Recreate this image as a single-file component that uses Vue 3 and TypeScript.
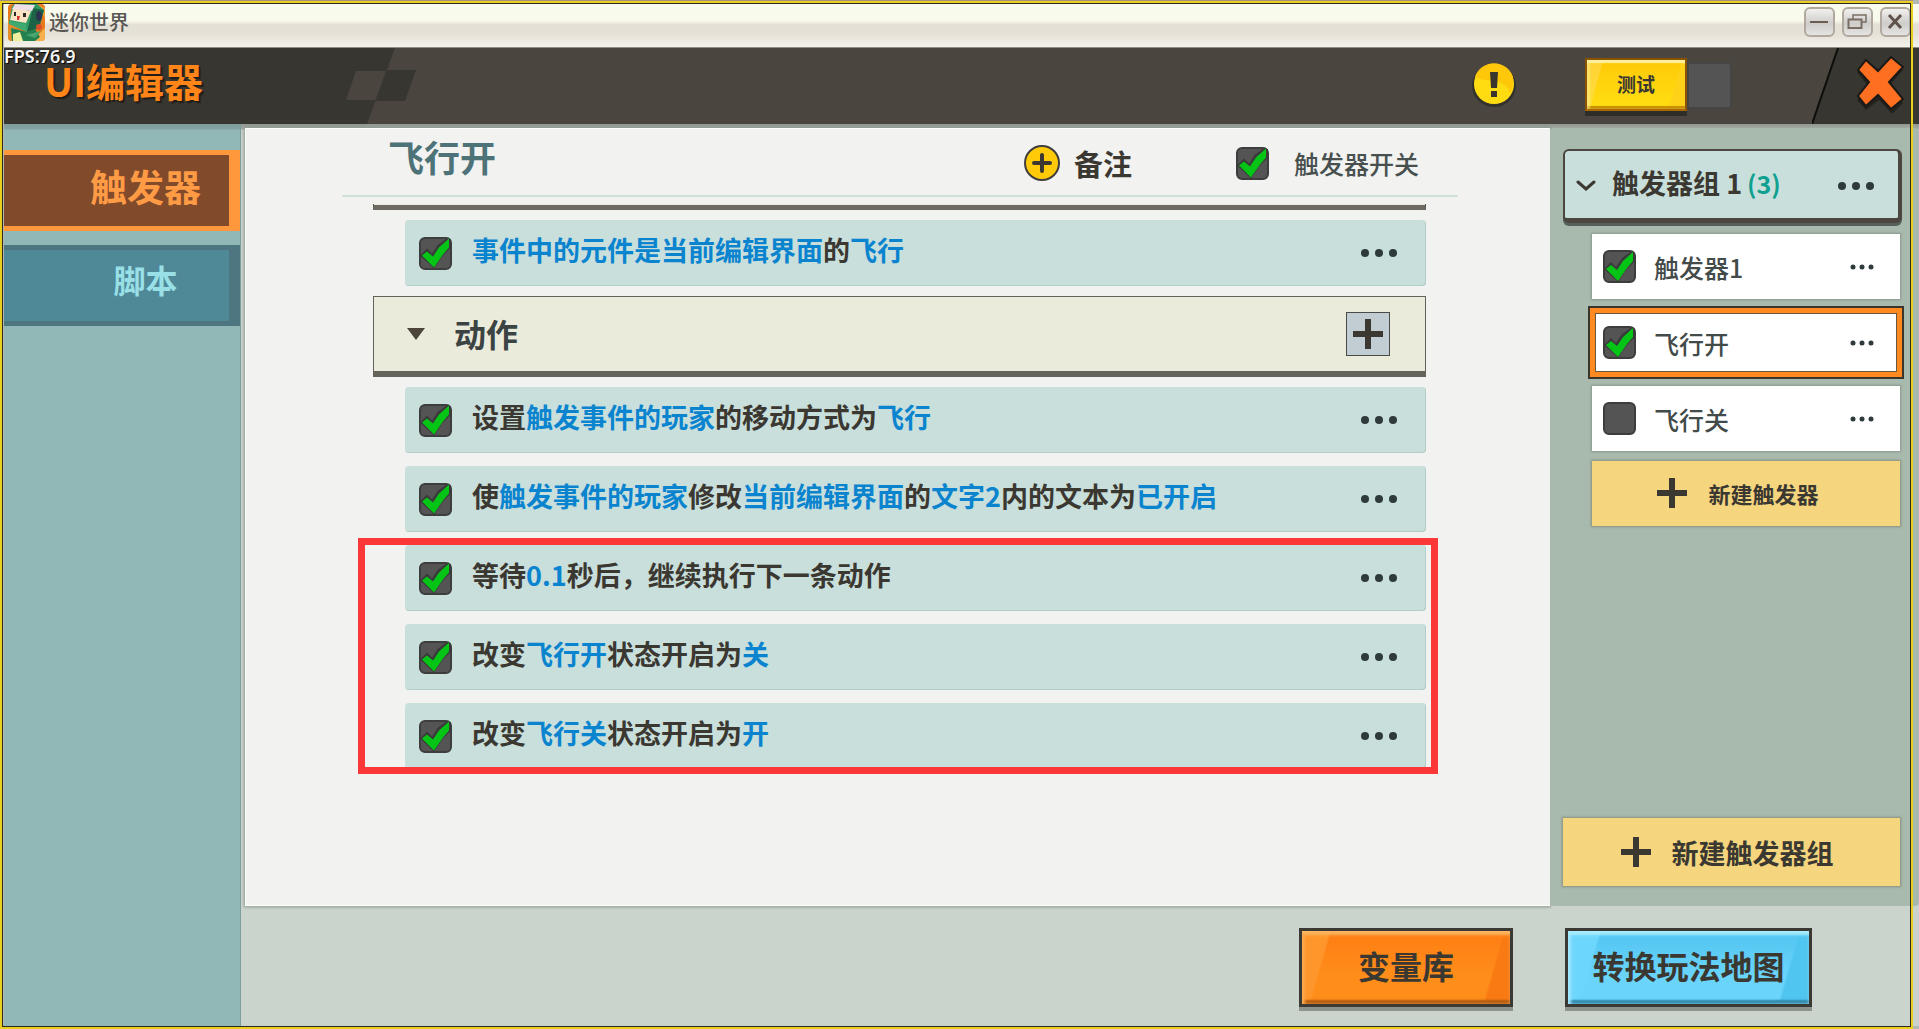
<script setup lang="ts">
import { reactive, ref } from 'vue'

interface Part {
  text: string
  link?: boolean
}
interface Rule {
  on: boolean
  parts: Part[]
}
interface Trigger {
  name: string
  on: boolean
}

const link = (text: string): Part => ({ text, link: true })
const word = (text: string): Part => ({ text })

const conditions = reactive<Rule[]>([
  { on: true, parts: [link('事件中的元件是当前编辑界面'), word('的'), link('飞行')] },
])

const actions = reactive<Rule[]>([
  { on: true, parts: [word('设置'), link('触发事件的玩家'), word('的移动方式为'), link('飞行')] },
  {
    on: true,
    parts: [
      word('使'),
      link('触发事件的玩家'),
      word('修改'),
      link('当前编辑界面'),
      word('的'),
      link('文字2'),
      word('内的文本为'),
      link('已开启'),
    ],
  },
])

const marked = reactive<Rule[]>([
  { on: true, parts: [word('等待'), link('0.1'), word('秒后，继续执行下一条动作')] },
  { on: true, parts: [word('改变'), link('飞行开'), word('状态开启为'), link('关')] },
  { on: true, parts: [word('改变'), link('飞行关'), word('状态开启为'), link('开')] },
])

const triggers = reactive<Trigger[]>([
  { name: '触发器1', on: true },
  { name: '飞行开', on: true },
  { name: '飞行关', on: false },
])

const selected = ref('飞行开')
const enabled = ref(true)
</script>

<template>
  <div class="window">
    <div class="titlebar">
      <svg class="app-icon" viewBox="0 0 37 37" aria-hidden="true">
        <rect width="37" height="37" rx="4" fill="#e8791c" />
        <path d="M28 0 L37 4 V14Z" fill="#f2a13c" />
        <path d="M24 37 L37 24 V33 Q37 37 33 37Z" fill="#f7b04a" />
        <path d="M0 14 L9 24 L4 37 Q0 37 0 33Z" fill="#e58a2b" />
        <path d="M7 0 H29 L36 6 L31 24 L19 28 L1 19 L4 2Z" fill="#2f9a63" />
        <path d="M25 4 L36 6 L31 24 L19 28Z" fill="#1d6446" />
        <path d="M5 4 L23 7 L18 19 L2 16Z" fill="#fbe3c4" />
        <path d="M7 0 L27 1 L24 7 L4 5Z" fill="#f0dfe6" />
        <path d="M1 17 L18 20 L19 28 L1 20Z" fill="#3dab70" />
        <rect x="6" y="8" width="2" height="4" fill="#2b2a26" />
        <rect x="15" y="9" width="3" height="4" fill="#2b2a26" />
        <path d="M9 12 h3 l-1 4 h-2z" fill="#d2392b" />
        <ellipse cx="31" cy="12" rx="3" ry="5" fill="#2a3350" />
        <path d="M3 24 L19 28 L27 25 L32 33 L27 37 H4Z" fill="#23804f" />
        <path d="M5 30 L12 28 L15 37 H5Z" fill="#eef0a0" />
        <circle cx="31" cy="23" r="3" fill="#d9502f" />
        <path d="M18 31 L33 27 L27 34Z" fill="#49a56d" />
      </svg>
      <span class="app-name">迷你世界</span>
      <div class="window-buttons">
        <button class="window-button" type="button" aria-label="最小化">
          <svg viewBox="0 0 31 31"><path d="M6 15h18" stroke="#6b5d52" stroke-width="2" /></svg>
        </button>
        <button class="window-button" type="button" aria-label="还原">
          <svg viewBox="0 0 62 62" fill="none" stroke="#7a6e64">
            <path d="M22 24V16H48V30H40" stroke-width="3" />
            <rect x="13" y="25" width="26" height="17" stroke-width="4" />
          </svg>
        </button>
        <button class="window-button" type="button" aria-label="关闭窗口">
          <svg viewBox="0 0 31 31"><path d="M9 8l12 13M21 8L9 21" stroke="#5f534b" stroke-width="3" /></svg>
        </button>
      </div>
    </div>

    <header class="header">
      <svg class="header-left" viewBox="4 0 420 76" aria-hidden="true">
        <path d="M0 0H395L367 76H0Z" fill="#383631" />
        <path d="M356 23H386L376 52H346Z" fill="#4a463f" />
        <path d="M387 22H416L405 53H375Z" fill="#383631" />
      </svg>
      <svg class="header-right" viewBox="0 0 107 76" aria-hidden="true">
        <path d="M26 0H107V76H0Z" fill="#383631" />
        <path d="M26 0L0 76" stroke="#0d0d0b" stroke-width="2" />
      </svg>
      <span class="fps">FPS:76.9</span>
      <h1 class="title">UI编辑器</h1>
      <button class="icon-button notice" type="button" aria-label="提示">
        <svg viewBox="0 0 44 44">
          <ellipse cx="22" cy="23" rx="22" ry="21" fill="#33312c" />
          <circle cx="22" cy="21" r="20" fill="#ffdc12" />
          <path d="M3 14A20 20 0 0 1 41 14Q42 22 38 31Q37 18 12 17Z" fill="#ffc70a" />
          <path d="M18 9h8l-1 16h-6z" fill="#38352e" />
          <rect x="19" y="28" width="6" height="6" fill="#38352e" />
        </svg>
      </button>
      <div class="test-switch">
        <button class="test-button" type="button">测试</button>
        <span class="test-track"></span>
      </div>
      <button class="icon-button close" type="button" aria-label="关闭">
        <svg viewBox="0 0 50 58">
          <path
            d="M11 6L24 18L36 2L48 13L34 29L48 46L37 57L24 43L11 53L2 43L13 29L2 15Z"
            fill="#161512"
            opacity="0.6"
            transform="translate(0 2)"
          />
          <path
            d="M11 5L23 16L36 2L48 12L34 27L48 44L36 54L23 40L11 51L3 41L14 27L3 15Z"
            fill="#ff6f22"
            stroke="#1b1915"
            stroke-width="2"
          />
        </svg>
      </button>
    </header>

    <div class="body">
      <nav class="tabs">
        <button class="tab active" type="button">触发器</button>
        <button class="tab script" type="button">脚本</button>
      </nav>

      <div class="workspace">
        <div class="panels">
          <main class="editor">
            <div class="editor-head">
              <h2 class="editor-title">飞行开</h2>
              <button class="note" type="button">
                <svg viewBox="0 0 36 36" aria-hidden="true">
                  <circle cx="18" cy="18" r="17" fill="#ffca08" stroke="#3f3e3c" stroke-width="2" />
                  <path d="M18 10v16M10 18h16" stroke="#3a3831" stroke-width="4" stroke-linecap="round" />
                </svg>
                备注
              </button>
              <label class="enable">
                <input v-model="enabled" class="check" type="checkbox" />
                触发器开关
              </label>
            </div>

            <div class="list">
              <div class="section-edge"></div>
              <div v-for="(rule, i) in conditions" :key="i" class="rule first">
                <input v-model="rule.on" class="check" type="checkbox" :aria-label="'条件' + (i + 1)" />
                <p class="rule-text">
                  <span v-for="(part, k) in rule.parts" :key="k" :class="{ link: part.link }">{{ part.text }}</span>
                </p>
                <button class="more" type="button" aria-label="更多">
                  <svg viewBox="0 0 36 10"><circle cx="4" cy="5" r="4" /><circle cx="18" cy="5" r="4" /><circle cx="32" cy="5" r="4" /></svg>
                </button>
              </div>

              <div class="section">
                <svg class="triangle" viewBox="0 0 18 12" aria-hidden="true"><path d="M0 0H18L9 12Z" fill="#4b453a" /></svg>
                <h3 class="section-name">动作</h3>
                <button class="add" type="button" aria-label="添加动作">
                  <svg viewBox="0 0 30 30"><path d="M15 0v30M0 15h30" stroke="#3b3832" stroke-width="6" /></svg>
                </button>
              </div>

              <div class="rules">
                <div v-for="(rule, i) in actions" :key="i" class="rule">
                  <input v-model="rule.on" class="check" type="checkbox" :aria-label="'动作' + (i + 1)" />
                  <p class="rule-text">
                    <span v-for="(part, k) in rule.parts" :key="k" :class="{ link: part.link }">{{ part.text }}</span>
                  </p>
                  <button class="more" type="button" aria-label="更多">
                    <svg viewBox="0 0 36 10"><circle cx="4" cy="5" r="4" /><circle cx="18" cy="5" r="4" /><circle cx="32" cy="5" r="4" /></svg>
                  </button>
                </div>
                <div class="rules marked">
                  <div v-for="(rule, i) in marked" :key="i" class="rule">
                    <input v-model="rule.on" class="check" type="checkbox" :aria-label="'动作' + (i + 3)" />
                    <p class="rule-text">
                      <span v-for="(part, k) in rule.parts" :key="k" :class="{ link: part.link }">{{ part.text }}</span>
                    </p>
                    <button class="more" type="button" aria-label="更多">
                      <svg viewBox="0 0 36 10"><circle cx="4" cy="5" r="4" /><circle cx="18" cy="5" r="4" /><circle cx="32" cy="5" r="4" /></svg>
                    </button>
                  </div>
                </div>
              </div>
            </div>
          </main>

          <aside class="groups">
            <div class="group">
              <svg class="chevron" viewBox="0 0 20 12" aria-hidden="true">
                <path d="M2 2L10 9L18 2" fill="none" stroke="#3b3832" stroke-width="3" stroke-linecap="round" />
              </svg>
              <h3 class="group-name">触发器组 1</h3>
              <span class="count">(3)</span>
              <button class="more" type="button" aria-label="更多">
                <svg viewBox="0 0 36 10"><circle cx="4" cy="5" r="4" /><circle cx="18" cy="5" r="4" /><circle cx="32" cy="5" r="4" /></svg>
              </button>
            </div>
            <ul class="triggers">
              <li
                v-for="(trigger, i) in triggers"
                :key="i"
                class="trigger"
                :class="{ selected: trigger.name === selected }"
                @click="selected = trigger.name"
              >
                <label class="trigger-label">
                  <input v-model="trigger.on" class="check" type="checkbox" />
                  {{ trigger.name }}
                </label>
                <button class="more small" type="button" aria-label="更多">
                  <svg viewBox="0 0 48 12"><circle cx="6" cy="6" r="5" /><circle cx="24" cy="6" r="5" /><circle cx="42" cy="6" r="5" /></svg>
                </button>
              </li>
            </ul>
            <button class="create create-trigger" type="button">
              <svg viewBox="0 0 30 30" aria-hidden="true"><path d="M15 0v30M0 15h30" stroke="#3b3832" stroke-width="6" /></svg>
              新建触发器
            </button>
            <button class="create create-group" type="button">
              <svg viewBox="0 0 30 30" aria-hidden="true"><path d="M15 0v30M0 15h30" stroke="#3b3832" stroke-width="6" /></svg>
              新建触发器组
            </button>
          </aside>
        </div>

        <footer class="footer">
          <button class="big orange" type="button">变量库</button>
          <button class="big blue" type="button">转换玩法地图</button>
        </footer>
      </div>
    </div>

    <div class="frame"></div>
  </div>
</template>

<style>
body {
  margin: 0;
  background: #cbd4cc;
}
</style>

<style scoped>
* {
  box-sizing: border-box;
}

.window {
  position: relative;
  display: flex;
  flex-direction: column;
  min-height: 100vh;
  padding: 4px 0 3px 4px;
  overflow: hidden;
  background: #b3b9ae;
  color: #3b3832;
  font-family: 'Noto Sans CJK SC', sans-serif;
  font-weight: 700;
}

h1,
h2,
h3,
p,
ul {
  margin: 0;
  padding: 0;
  font-weight: inherit;
}

button {
  display: flex;
  align-items: center;
  justify-content: center;
  margin: 0;
  padding: 0;
  border: 0;
  background: none;
  color: inherit;
  font-family: inherit;
  font-weight: inherit;
  cursor: pointer;
}

svg {
  display: block;
}

.frame {
  position: absolute;
  inset: 1px 6px 0 0;
  border: 2px solid #e9d01f;
  box-shadow:
    inset 0 0 0 1px #2b2922,
    0 -1px 0 #a39080;
  pointer-events: none;
}

/* Title bar */
.titlebar {
  display: flex;
  flex: none;
  align-items: flex-start;
  height: 44px;
  padding: 0 8px 0 4px;
  border-bottom: 1px solid #8f8c80;
  background: linear-gradient(#f9fbec 0, #f8faec 38%, #e5e0d6 48%, #e6e1d7 70%, #f3f2ea 100%);
}

.app-icon {
  width: 37px;
  height: 37px;
}

.app-name {
  margin: 4px 0 0 4px;
  color: #585754;
  font-size: 20px;
  font-weight: 500;
  line-height: 28px;
}

.window-buttons {
  display: flex;
  gap: 7px;
  margin: 3px 0 0 auto;
}

.window-button {
  width: 31px;
  height: 30px;
  border: 2px solid #b1a89f;
  border-radius: 6px;
  background: linear-gradient(#f2f0ee, #cfcdca 55%, #e6e4e2);
}

.window-button svg {
  flex: none;
  width: 31px;
  height: 31px;
}

/* Header */
.header {
  position: relative;
  display: flex;
  flex: none;
  align-items: flex-start;
  height: 76px;
  background: #4a463f;
}

.header-left,
.header-right {
  position: absolute;
  top: 0;
  height: 76px;
}

.header-left {
  left: 0;
  width: 420px;
}

.header-right {
  right: 0;
  width: 107px;
}

.fps {
  position: absolute;
  top: 0;
  left: 0;
  color: #f4f4f4;
  font-family: 'Noto Sans', sans-serif;
  font-size: 18px;
  font-weight: 600;
  line-height: 16px;
  text-shadow: 1px 1px 1px #000;
}

.title {
  position: relative;
  margin: 12px auto 0 40px;
  color: #ff8519;
  font-size: 39px;
  line-height: 40px;
  text-shadow: 2px 2px 1px #211d17;
}

.icon-button {
  position: relative;
}

.notice {
  margin: 15px 69px 0 0;
}

.notice svg {
  width: 44px;
  height: 44px;
}

.test-switch {
  display: flex;
  align-items: flex-start;
  margin: 10px 123px 0 0;
}

.test-button {
  width: 102px;
  height: 53px;
  padding-bottom: 3px;
  border: 2px solid #8a5300;
  border-bottom-color: #a86900;
  background:
    linear-gradient(105deg, #ffe28a55 14%, transparent 15%, transparent 85%, #ffd21a 86%),
    linear-gradient(#ffc908, #ffdf12);
  box-shadow:
    inset 0 3px 1px #fff0a0,
    inset 3px 0 2px #ffef9c88,
    inset 0 -3px 1px #c78c00,
    0 5px 0 #2f2d28;
  font-size: 19px;
}

.test-track {
  width: 45px;
  height: 47px;
  margin-top: 4px;
  border: 2px solid #454545;
  border-radius: 0 4px 4px 0;
  background: #545454;
}

.close {
  margin: 7px 14px 0 0;
}

.close svg {
  width: 50px;
  height: 58px;
}

/* Body */
.body {
  display: flex;
  flex: 1;
}

.tabs {
  flex: none;
  width: 237px;
  padding-top: 26px;
  border-right: 1px solid #7e9fa0;
  background: linear-gradient(#7f9d9e 0, #83a2a2 5px, #92b7b7 6px);
}

.tab {
  width: 100%;
  height: 81px;
  margin-bottom: 14px;
  border: 5px solid;
  border-width: 5px 11px 5px 0;
}

.active {
  padding: 0 0 10px 58px;
  border-color: #ff983d;
  background: #814b2b;
  color: #ff9a45;
  font-size: 37px;
}

.script {
  padding: 0 0 14px 58px;
  border-color: #4d7680;
  background: #4f8897;
  color: #98dfe6;
  font-size: 32px;
}

.workspace {
  display: flex;
  flex: 1;
  flex-direction: column;
  min-width: 0;
  background: #cbd4cc;
}

.panels {
  display: flex;
  flex: 1;
  padding-left: 4px;
  background: linear-gradient(#8f978f, #a5ada5 5px, #cbd4cc 6px);
}

/* Editor */
.editor {
  flex: 1;
  min-width: 0;
  margin-top: 4px;
  padding: 0 92px 0 96px;
  border: 1px solid #fff;
  border-right: 0;
  background: #f2f2f0;
  box-shadow: 0 0 3px 1px #8d978e;
}

.editor-head {
  display: flex;
  align-items: center;
  height: 68px;
  padding: 2px 39px 0 46px;
  border-bottom: 2px solid #d1e1d8;
}

.editor-title {
  flex: 1;
  padding-bottom: 14px;
  color: #4d7278;
  font-size: 36px;
  line-height: 44px;
}

.note {
  gap: 14px;
  margin-right: 104px;
  font-size: 29px;
  line-height: 36px;
}

.note svg {
  width: 36px;
  height: 36px;
}

.enable {
  display: flex;
  gap: 25px;
  align-items: center;
  color: #47504f;
  font-size: 25px;
  font-weight: 500;
  line-height: 32px;
}

.check {
  position: relative;
  flex: none;
  width: 33px;
  height: 33px;
  margin: 0;
  border: 2px solid #3d3d3d;
  border-radius: 6px;
  background: #545454;
  appearance: none;
}

.check:checked::before,
.check:checked::after {
  position: absolute;
  inset: -2px;
  background: #3a3a3a;
  clip-path: polygon(1px 19px, 8px 12px, 13px 17px, 19px 8px, 29px 1px, 32px 3px, 32px 11px, 24px 19px, 15px 32px);
  content: '';
}

.check:checked::after {
  background: #04c516;
  clip-path: polygon(3px 19px, 8px 15px, 14px 20px, 20px 11px, 30px 2px, 30px 11px, 24px 18px, 15px 31px);
}

.list {
  padding: 7px 32px 0 31px;
}

.section-edge {
  height: 6px;
  border: 1px solid #57554b;
  border-top: 0;
  border-bottom: 5px solid #6d6b64;
  background: #ebebdc;
}

.rule {
  display: flex;
  align-items: center;
  height: 66px;
  padding: 0 29px 0 14px;
  border-radius: 4px;
  background: #c9dfdb;
  box-shadow: inset -1px -1px 0 #b3cdc9;
}

.first {
  margin: 10px 0 10px 32px;
}

.rule-text {
  flex: 1;
  padding: 0 0 7px 20px;
  font-size: 27px;
  line-height: 32px;
}

.link {
  color: #0a84cf;
}

.more svg {
  width: 36px;
  height: 10px;
  fill: #2f3a3c;
}

.small svg {
  width: 24px;
  height: 6px;
}

.section {
  display: flex;
  align-items: center;
  height: 81px;
  margin-bottom: 10px;
  padding: 0 35px 0 33px;
  border: 1px solid #63615a;
  border-bottom: 6px solid #65635c;
  background: #ebebdc;
}

.triangle {
  width: 18px;
  height: 12px;
}

.section-name {
  flex: 1;
  padding: 0 0 2px 29px;
  color: #3c4443;
  font-size: 32px;
  line-height: 40px;
}

.add {
  width: 44px;
  height: 44px;
  border: 1px solid #4a4a48;
  background: #c1cdd3;
}

.add svg {
  width: 30px;
  height: 30px;
}

.rules {
  display: flex;
  flex-direction: column;
  gap: 13px;
  margin-left: 32px;
}

.marked {
  position: relative;
  margin-left: 0;
}

.marked::after {
  position: absolute;
  inset: -7px -12px -5px -47px;
  border: 7px solid #fb3838;
  content: '';
  pointer-events: none;
}

/* Trigger groups */
.groups {
  display: flex;
  flex: none;
  flex-direction: column;
  width: 369px;
  margin-top: 4px;
  padding: 21px 19px 20px 13px;
  border-radius: 4px;
  background: #a8b9ad;
}

.group {
  display: flex;
  align-items: center;
  height: 74px;
  margin-right: -2px;
  padding: 2px 24px 0 11px;
  border: solid #4b463f;
  border-width: 2px 4px 5px 2px;
  border-radius: 6px;
  background: #c9dfdb;
  box-shadow: 0 3px 0 #56605a;
}

.chevron {
  width: 20px;
  height: 12px;
}

.group-name {
  padding: 0 0 5px 16px;
  font-size: 27px;
  line-height: 36px;
}

.count {
  flex: 1;
  padding: 0 0 5px 5px;
  color: #0fa090;
  font-size: 25px;
  line-height: 36px;
}

.triggers {
  display: flex;
  flex-direction: column;
  gap: 11px;
  margin: 11px 0 0 29px;
  list-style: none;
}

.trigger {
  display: flex;
  align-items: center;
  height: 65px;
  padding: 0 26px 0 11px;
  background: #fff;
  box-shadow: 0 0 2px 1px #8a988f;
}

.selected {
  box-shadow:
    inset 0 0 0 3px #ff8a1f,
    inset 0 0 0 4px #69573f,
    0 0 0 2px #ff8a1f,
    0 0 0 4px #3d352b;
}

.trigger-label {
  display: flex;
  flex: 1;
  gap: 18px;
  align-items: center;
  color: #434b4a;
  font-size: 25px;
  font-weight: 500;
  line-height: 32px;
}

.create {
  flex: none;
  background: #f5d57e;
  box-shadow: 0 0 2px 1px #85917f;
}

.create svg {
  width: 30px;
  height: 30px;
}

.create-trigger {
  gap: 21px;
  height: 65px;
  margin: 10px 0 0 29px;
  padding: 0 16px 2px 0;
  font-size: 22px;
}

.create-group {
  gap: 21px;
  height: 68px;
  margin-top: auto;
  padding-right: 9px;
  font-size: 27px;
}

/* Footer */
.footer {
  display: flex;
  flex: none;
  gap: 52px;
  align-items: flex-start;
  justify-content: flex-end;
  height: 120px;
  padding: 22px 107px 0 0;
}

.big {
  height: 79px;
  padding-bottom: 6px;
  border: 3px solid #3b3933;
  font-size: 32px;
}

.orange {
  width: 214px;
  background:
    linear-gradient(106deg, #ff962b 12%, transparent 13%, transparent 88%, #f97a12 89%),
    linear-gradient(#ff7d13, #ff8d1a 60%);
  box-shadow:
    inset 0 4px 3px #ffb45f,
    inset 3px 0 3px #ffa54a,
    inset 0 -4px 2px #b25a10,
    0 4px 0 #8c938c;
}

.blue {
  width: 247px;
  background:
    linear-gradient(106deg, #6dd6fc 12%, transparent 13%, transparent 88%, #50c5f0 89%),
    linear-gradient(#50c4f0, #6ad4fb 60%);
  box-shadow:
    inset 0 4px 3px #a9ecff,
    inset 3px 0 3px #9fe6ff,
    inset 0 -4px 2px #2d86a8,
    0 4px 0 #8c938c;
}
</style>
